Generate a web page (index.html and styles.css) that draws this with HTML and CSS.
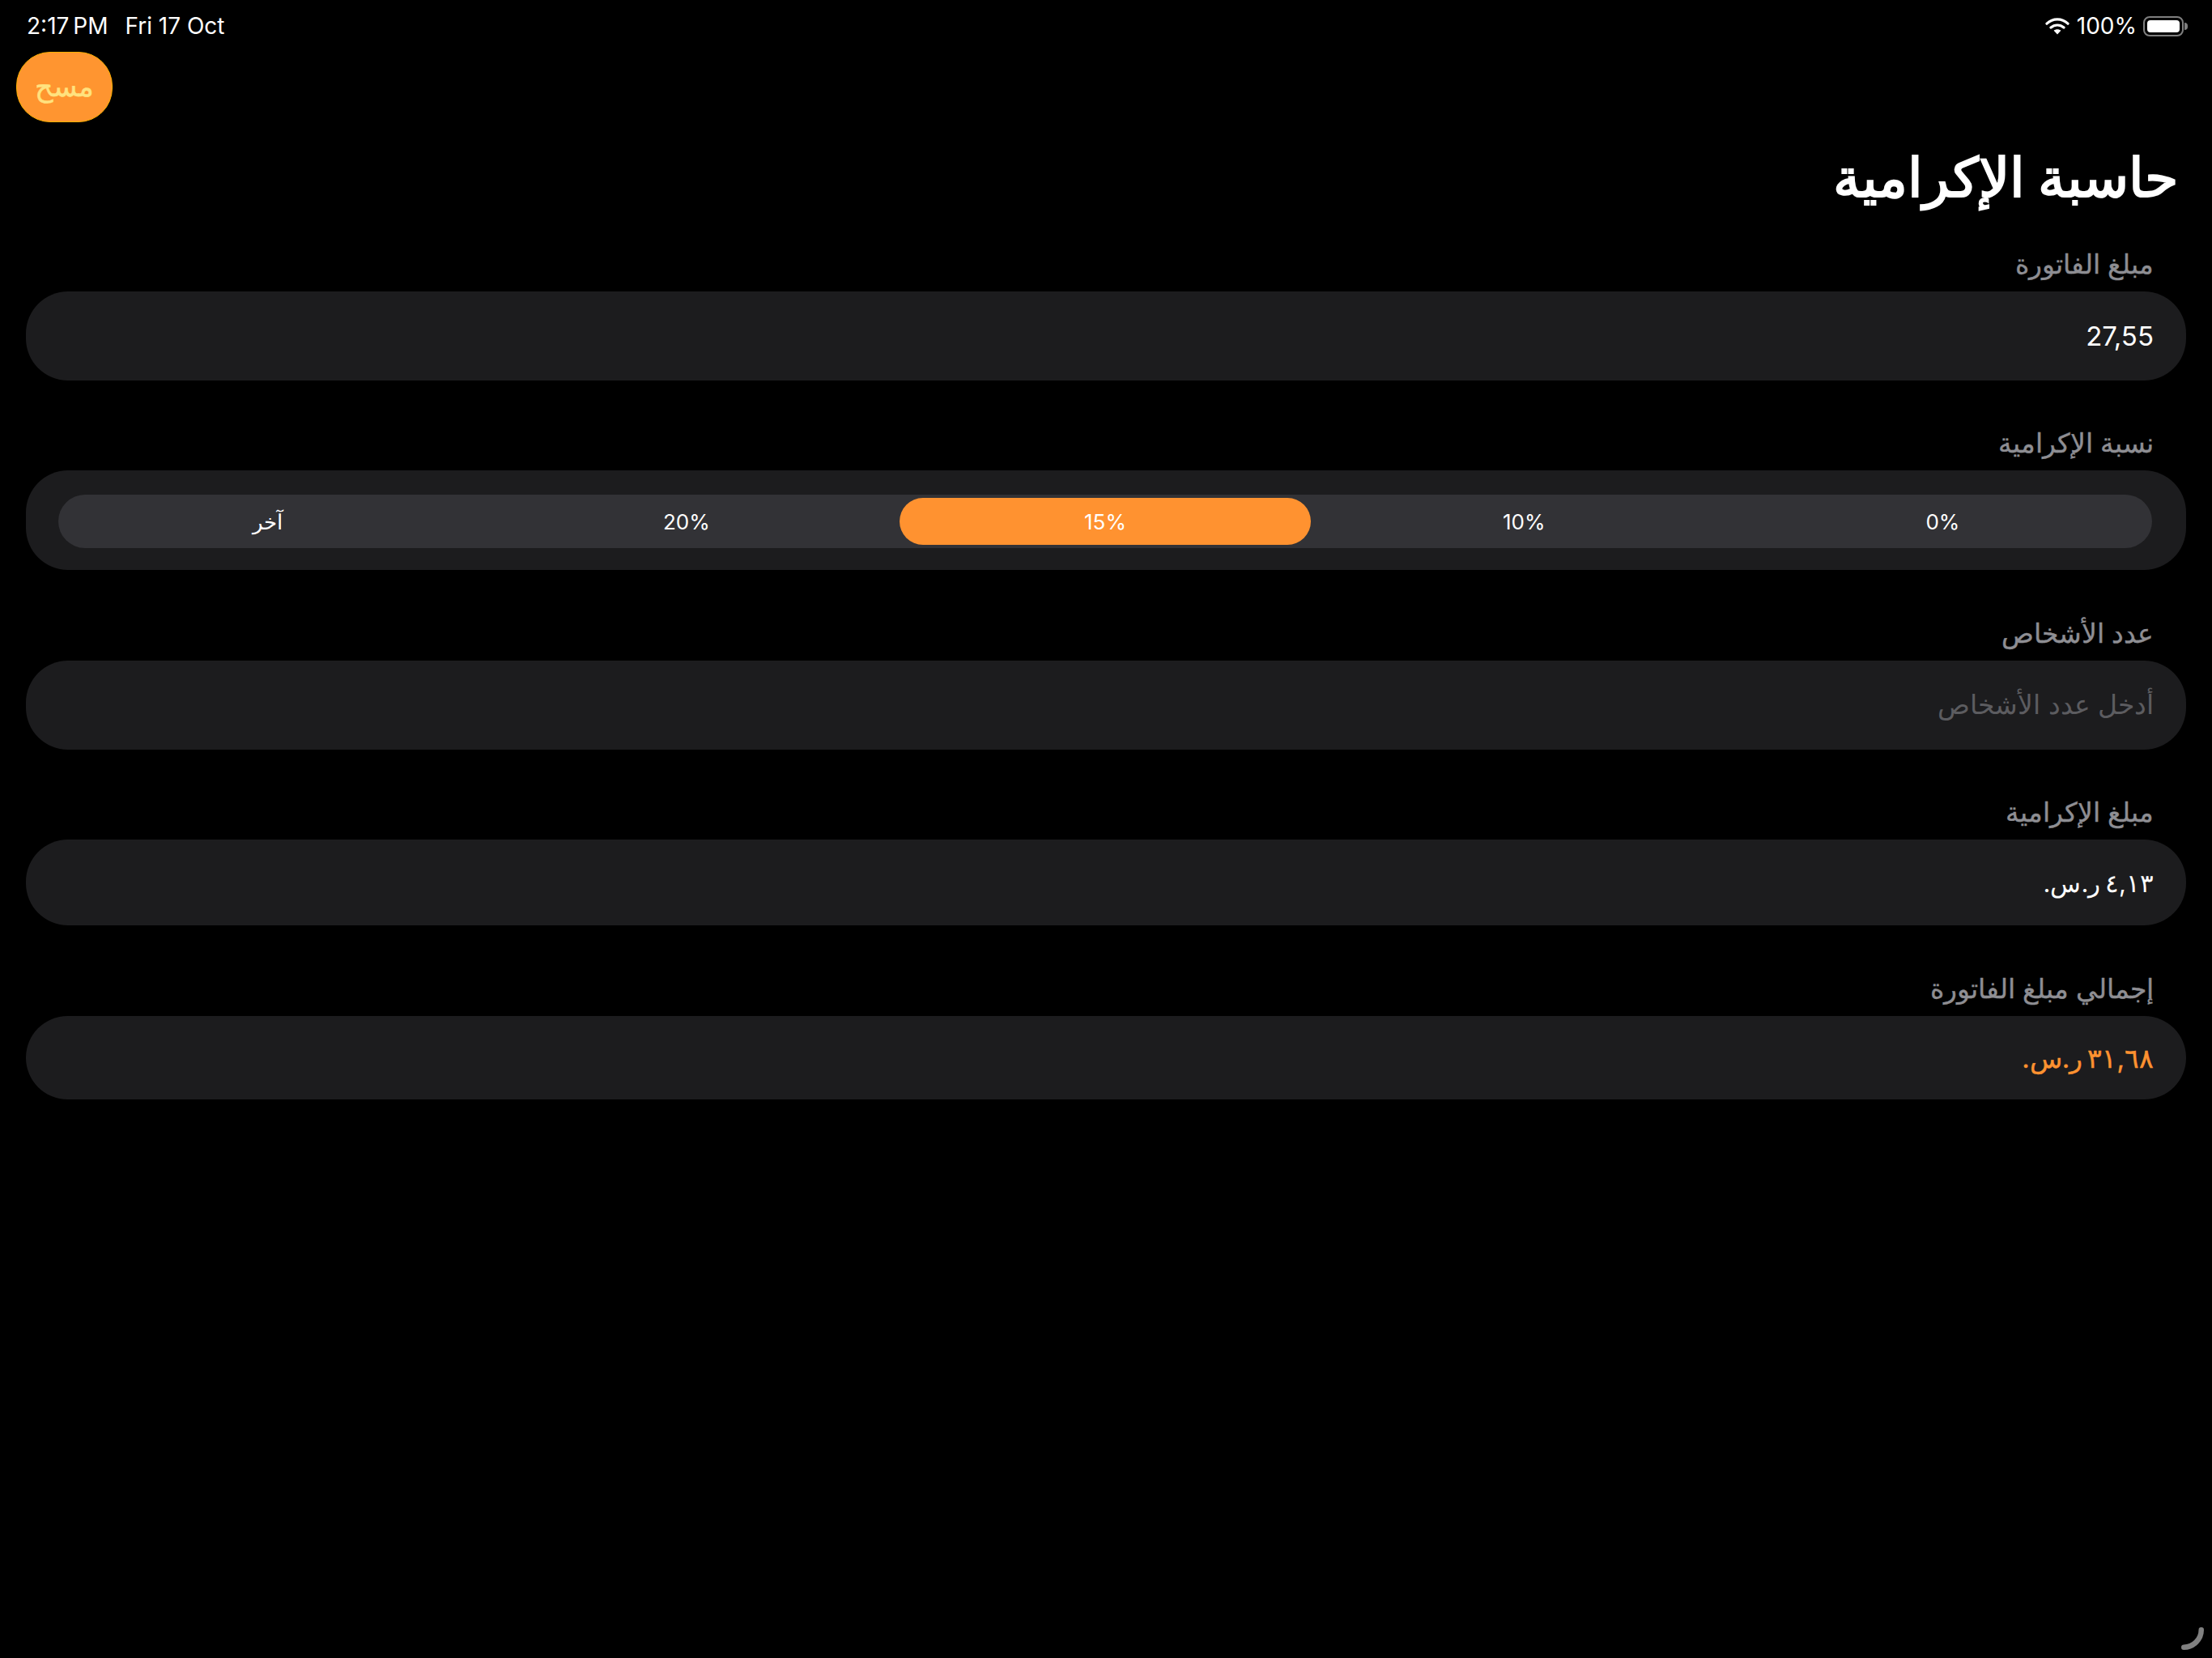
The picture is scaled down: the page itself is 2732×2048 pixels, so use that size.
FILE: index.html
```html
<!doctype html>
<html lang="ar">
<head>
<meta charset="utf-8">
<title>حاسبة الإكرامية</title>
<link rel="stylesheet" href="styles.css">
</head>
<body>
<div id="status" dir="ltr">
  <div class="status-left">
    <span class="time">2:17 PM</span>
    <span>Fri 17 Oct</span>
  </div>
  <div class="status-right">
    <svg class="wifi" width="30" height="22" viewBox="0 0 30 22">
      <path d="M2 8.2C9.5 1.2 20.5 1.2 28 8.2" fill="none" stroke="#fff" stroke-width="3.2" stroke-linecap="round"/>
      <path d="M7 13C11.6 9 18.4 9 23 13" fill="none" stroke="#fff" stroke-width="3.2" stroke-linecap="round"/>
      <path d="M15 21.5L10.6 16.8C13 14.8 17 14.8 19.4 16.8Z" fill="#fff"/>
    </svg>
    <span class="percent">100%</span>
    <div class="battery"><div class="battery-level"></div></div>
    <div class="battery-cap"></div>
  </div>
</div>
<div id="toolbar" dir="ltr">
  <button class="clear" dir="rtl">مسح</button>
</div>
<div id="wrapper" dir="rtl">
  <h1>حاسبة الإكرامية</h1>
  <div class="group">
    <div class="label">مبلغ الفاتورة</div>
    <div class="field field-tall value" dir="ltr"><span dir="ltr">27,55</span></div>
  </div>
  <div class="group group-wide">
    <div class="label">نسبة الإكرامية</div>
    <div class="card">
      <ul class="segments">
        <li>0%</li>
        <li>10%</li>
        <li class="selected">15%</li>
        <li>20%</li>
        <li>آخر</li>
      </ul>
    </div>
  </div>
  <div class="group">
    <div class="label">عدد الأشخاص</div>
    <div class="field field-tall placeholder">أدخل عدد الأشخاص</div>
  </div>
  <div class="group group-wide">
    <div class="label">مبلغ الإكرامية</div>
    <div class="field field-mid value">٤,١٣ ر.س.</div>
  </div>
  <div class="group">
    <div class="label">إجمالي مبلغ الفاتورة</div>
    <div class="field field-short total">٣١,٦٨ ر.س.</div>
  </div>
</div>
<svg class="corner" width="36" height="36" viewBox="0 0 36 36">
  <path d="M28.75 5.25C28.75 17 19 26.75 7.25 26.75" fill="none" stroke="#808080" stroke-width="6.5" stroke-linecap="round"/>
</svg>
</body>
</html>
```

FILE: styles.css
```css
html, body {
  border: 0;
  margin: 0;
  padding: 0;
  height: 100%;
}
body {
  background: #000;
  color: #fff;
  font-family: Inter, sans-serif;
  position: relative;
  overflow: hidden;
}
#status {
  display: flex;
  justify-content: space-between;
  align-items: center;
  height: 64px;
  padding: 0 30px 0 33px;
  font-size: 28px;
}
.status-left {
  display: flex;
  gap: 21px;
}
.time {
  word-spacing: -3px;
}
.status-right {
  display: flex;
  align-items: center;
}
.wifi {
  margin-right: 9px;
}
.percent {
  margin-right: 8px;
}
.battery {
  box-sizing: border-box;
  width: 50px;
  height: 25px;
  padding: 3px;
  border: 2px solid #7f7f7f;
  border-radius: 8px;
}
.battery-level {
  height: 100%;
  background: #fff;
  border-radius: 4px;
}
.battery-cap {
  width: 4px;
  height: 9px;
  margin-left: 1px;
  background: #7f7f7f;
  border-radius: 0 4px 4px 0;
}
#toolbar {
  padding-left: 20px;
  height: 87px;
}
.clear {
  box-sizing: border-box;
  display: block;
  width: 119px;
  height: 87px;
  padding: 0 0 3px 0;
  background: #ff9530;
  border: 1.5px solid #ffb000;
  border-radius: 42px;
  color: #ffe27f;
  font-family: inherit;
  font-size: 35px;
  font-weight: 500;
  -webkit-text-stroke: 0.5px #ffe27f;
}
#wrapper {
  padding: 0 32px;
}
#wrapper h1 {
  box-sizing: border-box;
  height: 155px;
  margin: 0;
  padding: 24px 10px 0 0;
  font-size: 67.2px;
  font-weight: bold;
  line-height: 88px;
}
.group {
  margin: 0 0 57px 0;
}
.group-wide {
  margin-bottom: 58px;
}
.label {
  height: 44px;
  margin-bottom: 10px;
  padding-right: 40px;
  color: #8e8e93;
  font-size: 33px;
  font-weight: 500;
  line-height: 41px;
  -webkit-text-stroke: 0.4px #8e8e93;
}
.field {
  display: flex;
  align-items: center;
  padding: 0 40px;
  background: #1c1c1e;
  border-radius: 52px;
  font-size: 33px;
}
.field[dir="ltr"] {
  justify-content: flex-end;
}
.field-tall {
  height: 110px;
}
.field-mid {
  height: 106px;
  font-size: 31px;
  word-spacing: -3px;
}
.field-short {
  height: 103px;
}
.placeholder {
  padding-bottom: 2px;
  height: 108px;
  color: #5c5c60;
}
.total {
  color: #ff9230;
  word-spacing: -3px;
  -webkit-text-stroke: 0.4px #ff9230;
}
.card {
  box-sizing: border-box;
  height: 123px;
  padding: 30px 42px 27px 40px;
  background: #1c1c1e;
  border-radius: 52px;
}
.segments {
  display: flex;
  margin: 0;
  padding: 0;
  height: 66px;
  list-style: none;
  background: #323236;
  border-radius: 33px;
}
.segments li {
  flex: 1;
  display: flex;
  align-items: center;
  justify-content: center;
  margin: 4px 5px;
  font-size: 26px;
  border-radius: 29px;
}
.segments .selected {
  background: #ff9230;
}
.corner {
  position: absolute;
  right: 6px;
  bottom: 4px;
}
```
